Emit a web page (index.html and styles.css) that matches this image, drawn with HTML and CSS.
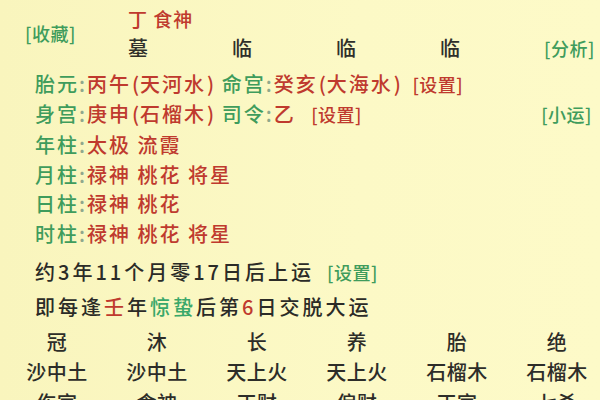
FILE: index.html
```html
<!DOCTYPE html>
<html lang="zh">
<head>
<meta charset="utf-8">
<link rel="stylesheet" href="styles.css">
</head>
<body>
<div class="page">
  <div class="head">
    <div class="side-l"><span class="g">[收藏]</span></div>
    <div class="mid">
      <div class="god r">丁 食神</div>
      <div class="stages">
        <span>墓</span><span>临</span><span>临</span><span>临</span>
      </div>
    </div>
    <div class="side-r"><span class="g">[分析]</span></div>
  </div>

  <div class="info">
    <div class="line l1">
      <span class="g">胎元</span><span class="c">:</span><span class="r">丙午<span class="p">(</span>天河水<span class="p">)</span></span>
      <span class="g">命宫</span><span class="c">:</span><span class="r">癸亥<span class="p">(</span>大海水<span class="p">)</span></span>
      <span class="r br">[设置]</span>
    </div>
    <div class="line l2">
      <div>
        <span class="g">身宫</span><span class="c">:</span><span class="r">庚申<span class="p">(</span>石榴木<span class="p">)</span></span>
        <span class="g">司令</span><span class="c">:</span><span class="r">乙</span>
        <span class="r br2">[设置]</span>
      </div>
      <span class="g tag">[小运]</span>
    </div>
    <div class="line pl first"><span class="g">年柱</span><span class="c">:</span><span class="r">太极 流霞</span></div>
    <div class="line pl"><span class="g">月柱</span><span class="c">:</span><span class="r">禄神 桃花 将星</span></div>
    <div class="line pl"><span class="g">日柱</span><span class="c">:</span><span class="r">禄神 桃花</span></div>
    <div class="line pl"><span class="g">时柱</span><span class="c">:</span><span class="r">禄神 桃花 将星</span></div>
    <div class="line dark l7">约3年11个月零17日后上运<span class="g sm">[设置]</span></div>
    <div class="line dark l8">即每逢<span class="r">壬</span>年<span class="g2">惊蛰</span>后第<span class="r">6</span>日交脱大运</div>
  </div>

  <div class="grid">
    <span>冠</span><span>沐</span><span>长</span><span>养</span><span>胎</span><span>绝</span>
    <span>沙中土</span><span>沙中土</span><span>天上火</span><span>天上火</span><span>石榴木</span><span>石榴木</span>
    <span>伤官</span><span>食神</span><span>正财</span><span>偏财</span><span>正官</span><span>七杀</span>
  </div>
</div>
</body>
</html>
```

FILE: styles.css
```css
* { box-sizing: border-box; }
html, body {
  margin: 0;
  padding: 0;
  width: 600px;
  height: 400px;
  overflow: hidden;
  background: #fbf8c3;
}
.page {
  font-family: "Noto Sans CJK SC", "Noto Sans", sans-serif;
  font-size: 20px;
  font-weight: 500;
  color: #2f2f2a;
  background: linear-gradient(90deg, #f9f5bd 0%, #fcf9c6 60%, #fdfac8 100%);
  height: 400px;
}
.g { color: #3f9c5c; }
.g2 { color: #3aa86a; }
.r { color: #bf3a2e; }
.c { color: #8fa88c; margin: 0 2px 0 0; letter-spacing: 0; }
.p { letter-spacing: 0; margin: 0 1px; }

.head {
  display: flex;
  height: 69px;
}
.side-l {
  flex: 0 0 128px;
  padding: 23px 0 0 25px;
  font-size: 18px;
  line-height: 21px;
  letter-spacing: 0.5px;
  white-space: nowrap;
}
.mid {
  flex: 0 0 416px;
  padding-top: 6px;
}
.god {
  font-size: 19px;
  line-height: 26px;
  letter-spacing: 1px;
}
.stages {
  display: grid;
  grid-template-columns: repeat(4, 104px);
  line-height: 31px;
}
.side-r {
  flex: 1 1 auto;
  padding: 38px 8px 0 0;
  text-align: right;
  font-size: 18px;
  line-height: 21px;
  letter-spacing: 0.5px;
  white-space: nowrap;
}

.info {
  padding-left: 35px;
  padding-right: 8px;
  letter-spacing: 2px;
}
.line {
  height: 30px;
  line-height: 30px;
  white-space: nowrap;
}
.l2 {
  display: flex;
  justify-content: space-between;
}
.pl { height: 29.5px; line-height: 29.5px; }
.pl.first { margin-top: 1px; }
.l7 { height: 36px; line-height: 36px; margin-top: 5.5px; letter-spacing: 3px; }
.l8 { height: 33px; line-height: 33px; letter-spacing: 3px; }
.tag { font-size: 18px; letter-spacing: 0.5px; }
.br { margin-left: 4px; font-size: 18px; letter-spacing: 0.5px; }
.br2 { margin-left: 9px; font-size: 18px; letter-spacing: 0.5px; }
.sm { font-size: 18px; margin-left: 13px; letter-spacing: 0.5px; }
.line.dark { color: #2b2b27; }

.grid {
  display: grid;
  grid-template-columns: repeat(6, 100px);
  grid-template-rows: 30px 31px 30px;
  padding-left: 7px;
  padding-top: 4.5px;
  line-height: 30px;
  text-align: center;
  color: #2d2d29;
  font-size: 20px;
  letter-spacing: 0.5px;
}
```
